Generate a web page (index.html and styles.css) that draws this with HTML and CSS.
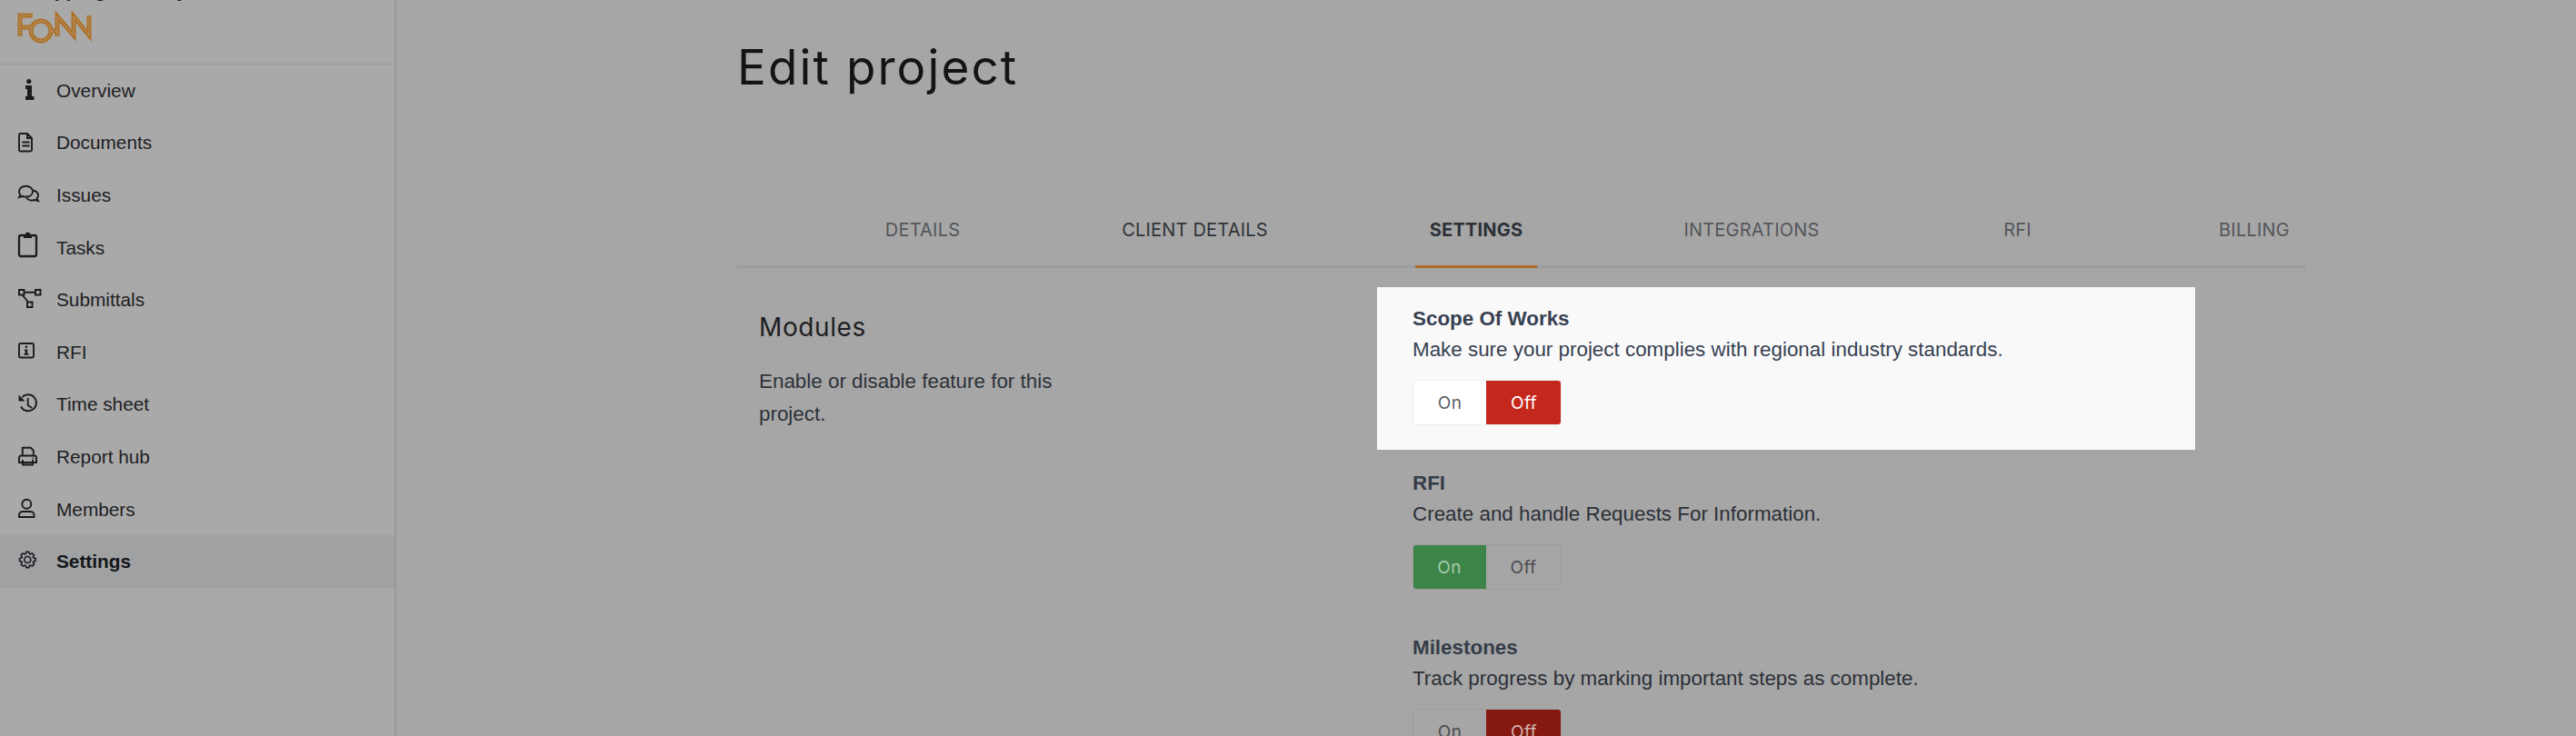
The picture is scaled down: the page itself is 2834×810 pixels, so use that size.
FILE: index.html
```html
<!DOCTYPE html>
<html lang="en">
<head>
<meta charset="utf-8">
<title>Edit project</title>
<link rel="stylesheet" href="styles.css">
</head>
<body>
<div class="app">
  <aside class="sidebar">
    <div class="brand">
      <div class="project-name">Shopping Gallery</div>
      <svg class="logo" viewBox="0 0 110 50" width="110" height="50">
        <g class="logo-outer">
          <path d="M36 17H22V40M22 30H35"/><circle cx="45" cy="34" r="11"/><path d="M56 34H63M63 40V18L81 39V18L98 39V17"/>
        </g>
        <g class="logo-inner">
          <path d="M36 17H22V40M22 30H35"/><circle cx="45" cy="34" r="11"/><path d="M56 34H63M63 40V18L81 39V18L98 39V17"/>
        </g>
      </svg>
    </div>
    <nav class="nav">
      <a class="nav-item"><svg class="ico" viewBox="0 0 22 22"><circle cx="11.800" cy="0.500" r="2.600" class="fill"/><path class="fill" d="M8 5h7v12h2.500v4H8v-4h2v-8H8z"/></svg><span>Overview</span></a>
      <a class="nav-item"><svg class="ico" viewBox="0 0 22 22"><path d="M2.500 1H10l5 5v13a1.500 1.500 0 0 1-1.500 1.500h-11A1.500 1.500 0 0 1 1 19V2.500A1.500 1.500 0 0 1 2.500 1zM10 1v5h5M4.500 10.500h8M4.500 14.500h8"/></svg><span>Documents</span></a>
      <a class="nav-item"><svg class="ico" viewBox="0 0 22 22"><path d="M8.500.8C4 .8 1 3.500 1 7c0 1.500.6 2.700 1.500 3.700L1 13l4-1c1 .4 2.200.6 3.500.6 4.500 0 7.500-2.500 7.500-5.800S13 .8 8.500.8z"/><path d="M16.500 5.500c3 .8 5.500 2.500 5.500 5.500 0 1.500-.5 2.500-1.500 3.500L22 17l-4-1c-3 1-7 .5-9-2.500"/></svg><span>Issues</span></a>
      <a class="nav-item"><svg class="ico ico-bold" viewBox="0 0 22 22"><rect x="1" y="-3" width="19" height="23" rx="2"/><path class="fill" d="M6 0V-4h2a2.500 2.500 0 0 1 5 0h2V0z"/></svg><span>Tasks</span></a>
      <a class="nav-item"><svg class="ico" viewBox="0 0 22 22"><path d="M1 0h5.500v5.500H1zM19 0h5.500v5.500H19zM10 13.500h5.500V19H10zM6.500 2.700H19M4.500 5.500l6.500 8"/></svg><span>Submittals</span></a>
      <a class="nav-item"><svg class="ico" viewBox="0 0 22 22"><rect x="1" y="1" width="16" height="15.500" rx="1.500"/><circle class="fill" cx="9" cy="4.800" r="1.300"/><path class="fill" d="M7 7.500h3.200V12h1.300v1.800h-5V12h1.200V9.300H7z"/></svg><span>RFI</span></a>
      <a class="nav-item"><svg class="ico" viewBox="0 0 22 22"><path d="M4.500 3A9 9 0 1 1 3 13.500M10.700 4v8l4.500 3"/><path class="fill" d="M.5.5v7H7.500z"/></svg><span>Time sheet</span></a>
      <a class="nav-item"><svg class="ico" viewBox="0 0 22 22"><path d="M4.800 9V.8h9l3 3V9M1 17v-5.500a2 2 0 0 1 2-2h15a2 2 0 0 1 2 2V17zM5 14v5.500h11V14"/><circle class="fill" cx="16.500" cy="12.300" r=".9"/></svg><span>Report hub</span></a>
      <a class="nav-item"><svg class="ico" viewBox="0 0 22 22"><circle cx="9.300" cy="4.800" r="5"/><path d="M1 19v-2.500c0-2 2-3.500 4-3.500h8.500c2 0 4 1.500 4 3.500V19z"/></svg><span>Members</span></a>
      <a class="nav-item active"><svg class="ico" viewBox="0 0 22 22"><g transform="translate(10.300 9) scale(.88)"><polygon points="9.88,1.56 7.14,2.6 6.89,3.21 8.09,5.88 5.88,8.09 3.21,6.89 2.6,7.14 1.56,9.88 -1.56,9.88 -2.6,7.14 -3.21,6.89 -5.88,8.09 -8.09,5.88 -6.89,3.21 -7.14,2.6 -9.88,1.56 -9.88,-1.56 -7.14,-2.6 -6.89,-3.21 -8.09,-5.88 -5.88,-8.09 -3.21,-6.89 -2.6,-7.14 -1.56,-9.88 1.56,-9.88 2.6,-7.14 3.21,-6.89 5.88,-8.09 8.09,-5.88 6.89,-3.21 7.14,-2.6 9.88,-1.56"/><circle r="4"/></g></svg><span>Settings</span></a>
    </nav>
  </aside>
  <main class="main">
    <h1 class="title">Edit project</h1>
    <div class="tabs">
      <a class="tab tab-details">DETAILS</a>
      <a class="tab tab-client">CLIENT DETAILS</a>
      <a class="tab tab-settings">SETTINGS</a>
      <a class="tab tab-integrations">INTEGRATIONS</a>
      <a class="tab tab-rfi">RFI</a>
      <a class="tab tab-billing">BILLING</a>
    </div>
    <div class="panel">
      <section class="intro">
        <h2 class="intro-title">Modules</h2>
        <p class="intro-text">Enable or disable feature for this project.</p>
      </section>
      <section class="modules">
        <article class="module module-lit">
          <h3 class="module-title">Scope Of Works</h3>
          <p class="module-text">Make sure your project complies with regional industry standards.</p>
          <div class="toggle toggle-lit"><span class="opt opt-on">On</span><span class="opt opt-off off-on">Off</span></div>
        </article>
        <article class="module">
          <h3 class="module-title">RFI</h3>
          <p class="module-text">Create and handle Requests For Information.</p>
          <div class="toggle"><span class="opt opt-on on-on">On</span><span class="opt opt-off">Off</span></div>
        </article>
        <article class="module">
          <h3 class="module-title">Milestones</h3>
          <p class="module-text">Track progress by marking important steps as complete.</p>
          <div class="toggle"><span class="opt opt-on">On</span><span class="opt opt-off off-on">Off</span></div>
        </article>
      </section>
    </div>
  </main>
</div>
</body>
</html>
```
FILE: styles.css
```css
* { box-sizing: border-box; }
html, body { margin: 0; height: 810px; overflow: hidden; background: #a6a6a6; }
body { font-family: "Liberation Sans", Arial, sans-serif; color: #1a1c1f; }
.app { display: flex; height: 810px; overflow: hidden; }

.sidebar { width: 436px; flex: none; background: #a9a9a9; border-right: 2px solid #999a9b; }
.brand { height: 71px; padding-left: 20px; border-bottom: 1px solid #999a9b; overflow: hidden; }
.project-name { font-size: 21px; line-height: 24px; font-weight: 700; word-spacing: 12px; margin-top: -22px; color: #1a1c1f; white-space: nowrap; }
.logo { display: block; margin-left: -20px; margin-top: -2px; }
.logo-outer, .logo-inner { fill: none; stroke-linejoin: miter; }
.logo-outer { stroke: #ad7228; stroke-width: 5px; }
.logo-inner { stroke: #b09a7c; stroke-width: 0.8px; }

.nav { display: flex; flex-direction: column; }
.nav-item { display: flex; align-items: center; height: 57.6px; padding-left: 20px; font-size: 20.8px; color: #1e2023; }
.ico { width: 22px; height: 22px; margin-right: 20px; flex: none; overflow: visible; fill: none; stroke: #1a1c1f; stroke-width: 1.9; }
.ico-bold { stroke-width: 2.3; }
.ico .fill { fill: #1a1c1f; stroke: none; }
.active { background: #a0a1a3; font-weight: 700; color: #141619; }

.main { flex: 1; padding-left: 374px; padding-right: 297px; }
.title { margin: 42px 0 0 1px; font-family: Inter, sans-serif; font-weight: 400; font-size: 53px; line-height: 64px; letter-spacing: 2.1px; color: #121416; }
.tabs { display: flex; height: 62px; margin-top: 127px; border-bottom: 3px solid #9b9c9e; font-family: Inter, sans-serif; font-size: 20px; letter-spacing: 0.2px; color: #54575b; }
.tab { display: flex; align-items: center; justify-content: center; flex: none; height: 62px; padding-bottom: 23px; white-space: nowrap; }
.tab-details { margin-left: 164px; width: 82px; }
.tab-client { margin-left: 178px; width: 161px; color: #2f3338; }
.tab-settings { margin-left: 162px; width: 134px; border-bottom: 3px solid #ac6d28; padding-bottom: 20px; font-weight: 700; color: #2c3138; }
.tab-integrations { margin-left: 161px; width: 150px; }
.tab-rfi { margin-left: 204px; width: 27px; }
.tab-billing { margin-left: 207px; width: 80px; }

.panel { display: flex; }
.intro { width: 705px; padding: 49px 26px 0 25px; }
.intro-title { margin: 0; font-family: Inter, sans-serif; font-weight: 400; font-size: 28px; line-height: 32px; letter-spacing: 0.6px; color: #1e2023; }
.intro-text { margin: 26px 0 0; width: 370px; font-size: 22.4px; line-height: 36px; color: #2d3239; }
.modules { width: 900px; padding-top: 21px; display: flex; flex-direction: column; }
.module { height: 181px; padding: 21px 40px 0 39px; color: #262a30; }
.module-lit { height: 179px; background: #f9f9fa; margin-bottom: 2px; }
.module-title { margin: 0; font-size: 22.4px; line-height: 28px; font-weight: 700; color: #343c48; }
.module-lit .module-title { color: #374151; }
.module-text { margin: 6px 0 0; font-size: 22.4px; line-height: 28px; color: #2c3038; }
.module-lit .module-text { color: #374151; }
.toggle { display: flex; width: 164px; height: 50px; margin-top: 19px; border: 1px solid #9d9e9f; border-radius: 4px; overflow: hidden; font-family: Inter, sans-serif; font-size: 19px; letter-spacing: 0.3px; color: #4a4c50; }
.toggle-lit { background: #fff; border-color: #eceef0; color: #5b5f66; }
.opt { display: flex; align-items: center; justify-content: center; }
.opt-on { width: 80px; }
.opt-off { flex: 1; }
.on-on { background: #3d8449; color: #a7c8ae; margin: -1px 0 -1px -1px; width: 81px; }
.off-on { background: #86190f; color: #d3b4b0; margin: -1px -1px -1px 0; }
.toggle-lit .off-on { background: #c4281c; color: #fff; }
```
